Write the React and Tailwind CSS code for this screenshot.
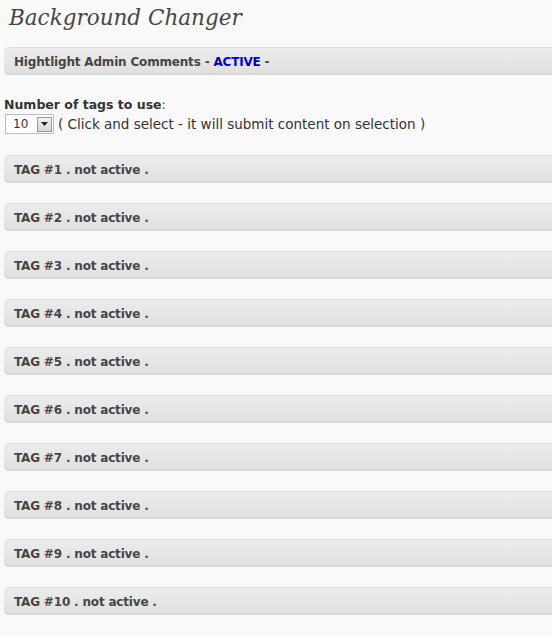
import React from "react";

function Bar({ children }) {
  return (
    <div className="h-[28px] -mr-[12px] rounded-l-[5px] rounded-r-[5px] border-t border-[#dcdcdc] bg-[linear-gradient(to_bottom,#ececec,#dfdfdf)] shadow-[inset_0_-2px_0_#d8d8d8] flex items-center pl-[10px] text-[12px] font-bold tracking-[-0.18px] text-[#464646]">
      {children}
    </div>
  );
}

export default function App() {
  const tags = [1, 2, 3, 4, 5, 6, 7, 8, 9, 10];
  return (
    <div className="min-h-[636px] w-[552px] overflow-hidden bg-[#f9f9f9] pl-[4px] font-['DejaVu_Sans',Verdana,sans-serif] text-[#333]">
      <h2 className="h-[47px] pl-[5px] pt-[2px] font-['DejaVu_Serif',Georgia,serif] italic text-[21.5px] leading-[32px] text-[#464646]">
        Background Changer
      </h2>
      <Bar>
        Hightlight Admin Comments <span className="ml-[4px]">-</span>
        <span className="text-[#0000cc] ml-[4px]">ACTIVE</span>
        <span className="ml-[4px]">-</span>
      </Bar>
      <div className="mt-[22px] text-[12.5px] font-bold text-[#333] leading-[16px]">
        Number of tags to use<span className="font-normal">:</span>
      </div>
      <div className="mt-[1px] flex items-center text-[13.5px] text-[#333]">
        <div className="ml-[1px] h-[20px] w-[49px] border border-[#b8bec4] bg-white flex items-center justify-between pl-[7px] pr-[1px] text-[12px]">
          <span>10</span>
          <div className="h-[15px] w-[15px] border border-[#9a9a9a] bg-[linear-gradient(to_bottom,#f2f2f2,#d6d6d6)] flex items-center justify-center">
            <svg width="7" height="4" viewBox="0 0 7 4"><path d="M0 0h7L3.5 4z" fill="#222" /></svg>
          </div>
        </div>
        <span className="ml-[4px]">( Click and select - it will submit content on selection )</span>
      </div>
      <div className="mt-[21px] flex flex-col gap-[20px]">
        {tags.map((n) => (
          <Bar key={n}>TAG #{n} . not active .</Bar>
        ))}
      </div>
    </div>
  );
}
